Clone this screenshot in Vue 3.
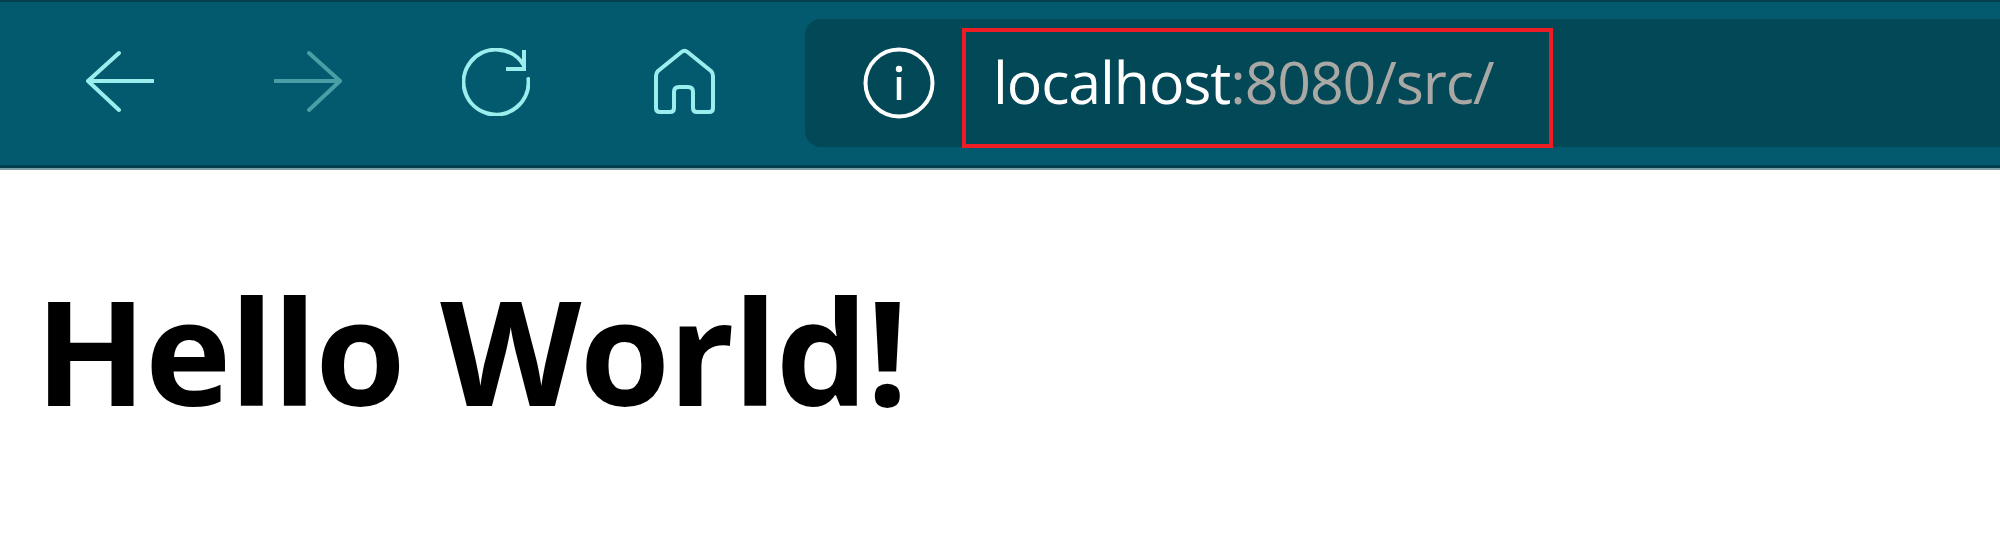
<template>
  <div class="page">
    <header class="toolbar">
      <div class="nav-btn">
        <svg width="68" height="68" viewBox="0 0 68 68" fill="none" stroke="currentColor" stroke-width="4" stroke-linecap="round" stroke-linejoin="round"><path d="M2 33H67M33 5 2 33l31 29"/></svg>
      </div>
      <div class="nav-btn disabled">
        <svg width="68" height="68" viewBox="0 0 68 68" fill="none" stroke="currentColor" stroke-width="4" stroke-linecap="round" stroke-linejoin="round"><path d="M1 33H66M35 5l31 28-31 29"/></svg>
      </div>
      <div class="nav-btn">
        <svg width="68" height="68" viewBox="0 0 68 68" fill="none" stroke="currentColor" stroke-width="4" stroke-linecap="round"><path d="M62 17.500A32.500 32.500 0 1 0 66.400 31"/><path d="M62 2V21H44" stroke-linecap="butt"/></svg>
      </div>
      <div class="nav-btn">
        <svg width="68" height="68" viewBox="0 0 68 68" fill="none" stroke="currentColor" stroke-width="4" stroke-linejoin="round"><path d="M31.500 4Q34.500 1.500 37.500 4L61 23Q63 25 63 28V60Q63 64 59 64H47Q43 64 43 60V44Q43 39 38 39H29Q24 39 24 44V60Q24 64 20 64H10Q6 64 6 60V28Q6 25 8 23Z"/></svg>
      </div>
      <div class="address">
        <svg class="info" width="72" height="72" viewBox="0 0 72 72" fill="none" stroke="currentColor" stroke-width="4"><circle cx="36" cy="36" r="33.500"/><path d="M36 30V53" stroke-width="4.500"/><circle cx="36" cy="22" r="3.200" fill="currentColor" stroke="none"/></svg>
        <div class="url-box"><span class="host">localhost</span><span class="rest">:8080/src/</span></div>
      </div>
    </header>
    <h1 class="title">Hello World!</h1>
  </div>
</template>

<script setup>
</script>

<style scoped>
.page {
  width: 2000px;
  height: 542px;
  background: #fff;
  overflow: hidden;
  font-family: "Open Sans", "Noto Sans", sans-serif;
}

.toolbar {
  box-sizing: border-box;
  height: 168px;
  display: flex;
  padding: 17px 0 18px 26px;
  margin-bottom: 2px;
  background: #035a6e;
  border-top: 2px solid #033f4d;
  border-bottom: 3px solid #033f4d;
  box-shadow: 0 2px 0 #7d9ea8;
}

.nav-btn {
  width: 188px;
  padding-bottom: 2px;
  display: flex;
  align-items: center;
  justify-content: center;
  color: #9beeed;
}

.nav-btn.disabled {
  color: #4a9ea6;
}

.address {
  flex: 1;
  margin-left: 27px;
  display: flex;
  align-items: center;
  background: #034856;
  border-radius: 16px 0 0 16px;
  padding-left: 58px;
  color: #fff;
}

.url-box {
  box-sizing: border-box;
  margin-left: 27px;
  margin-bottom: -1px;
  width: 591px;
  height: 120px;
  align-self: flex-end;
  border: 4px solid #ee1c25;
  padding-left: 27px;
  font-size: 59px;
  letter-spacing: -1.1px;
  line-height: 98px;
  white-space: nowrap;
}

.rest {
  color: #aaa8a5;
}

.title {
  margin: 83px 0 0 35px;
  font-size: 146px;
  font-weight: 700;
  line-height: 1.36;
  color: #000;
  letter-spacing: -1.7px;
  white-space: nowrap;
}
</style>

<style>
html,
body {
  margin: 0;
  background: #fff;
}
</style>
